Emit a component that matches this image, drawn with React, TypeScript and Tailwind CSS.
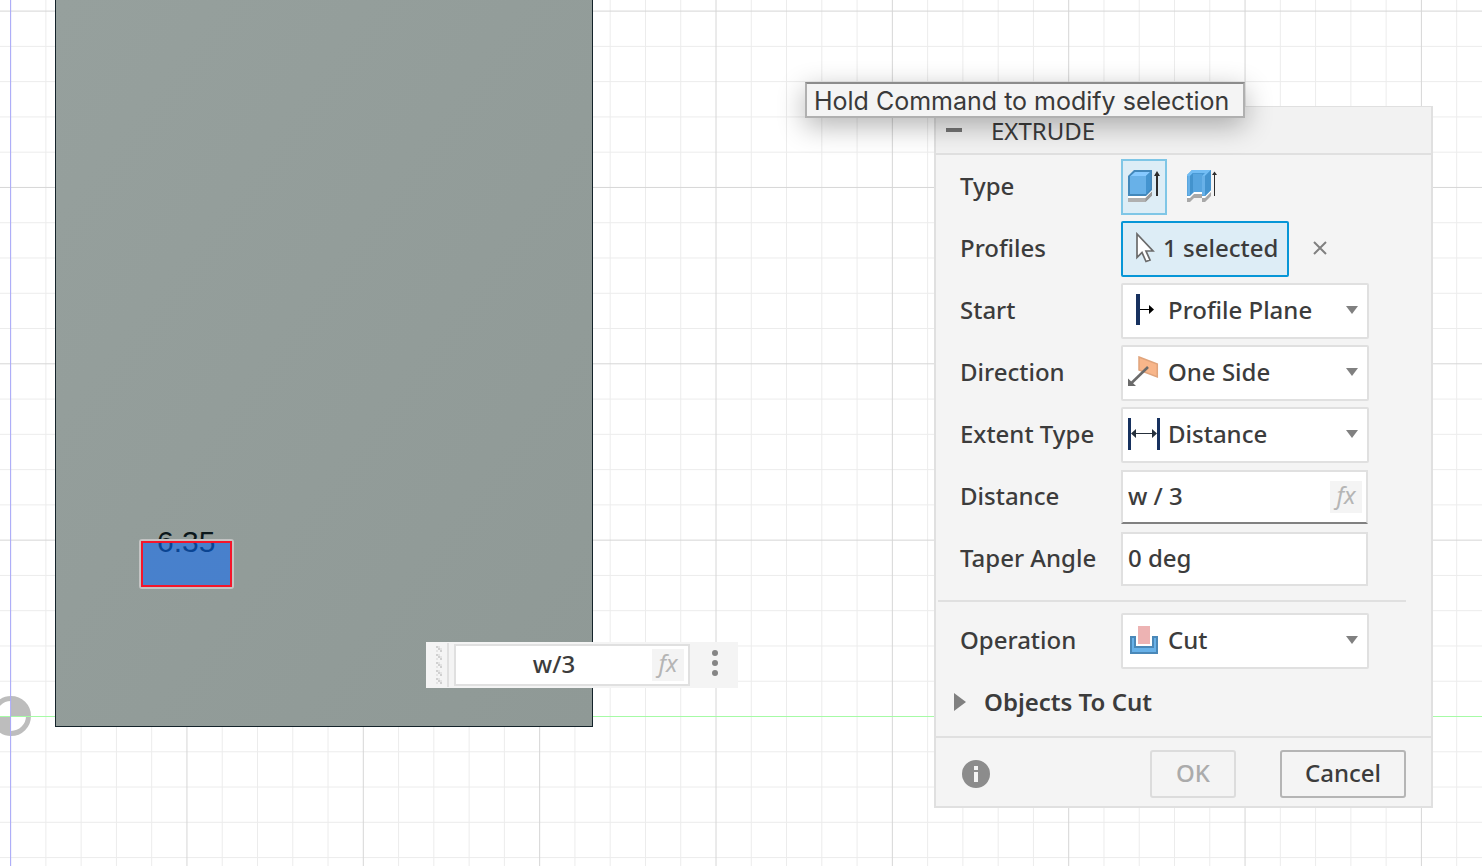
import React, { useState } from 'react';

const PITCH = 35.27;
const ORIGIN_X = 10.6;
const ORIGIN_Y = 716.5;

const gridSteps = Array.from({ length: 120 }, (_, i) => i - 30);

const SketchGrid: React.FC = () => (
  <svg className="absolute inset-0 h-full w-full" aria-hidden="true">
    {[false, true].map((major) =>
      gridSteps
        .filter((n) => (n % 5 === 0) === major)
        .map((n) => {
          const x = ORIGIN_X + n * PITCH;
          const y = ORIGIN_Y + n * PITCH;
          return (
            <g key={n} stroke={major ? '#d6d6d6' : '#ececec'}>
              <line x1={x} x2={x} y1="0" y2="100%" />
              <line x1="0" x2="100%" y1={y} y2={y} />
            </g>
          );
        })
    )}
    {/* Origin marker */}
    <circle cx="11" cy="716" r="17.5" fill="#fff" stroke="#bdbdbd" strokeWidth="5" />
    <path d="M11 716V697A19 19 0 0 1 30 716ZM11 716V735A19 19 0 0 1 -8 716Z" fill="#bdbdbd" />
    <line x1="0" x2="100%" y1={ORIGIN_Y} y2={ORIGIN_Y} stroke="#a6fba6" />
    <line x1={ORIGIN_X} x2={ORIGIN_X} y1="0" y2="100%" stroke="#a9a9fb" />
  </svg>
);

const ExtrudeIcon = () => (
  <svg width="32" height="32" viewBox="0 0 32 32">
    <path d="M0 26H18L24 20V22L18 28H0Z" fill="#fff" />
    <path d="M0 28H17.5L24 21.5V25.5L17.5 32H0Z" fill="#b0b0b0" />
    <path d="M17.5 28L24 21.5V25.5L17.5 32Z" fill="#989898" />
    <path d="M0 6L6 0H24V20L18 26H0Z" fill="#4388bb" />
    <path d="M2.5 6L7 2H22L18 6Z" fill="#86c9ff" />
    <path d="M18 6L22.5 2V19L18 24Z" fill="#4494cf" />
    <path d="M2 6H18V24H2Z" fill="#68b1e8" />
    <path d="M29 5V26" stroke="#2c2c2c" strokeWidth="2" />
    <path d="M26 6L29 1L32 6Z" fill="#2c2c2c" />
  </svg>
);

const ThinExtrudeIcon = () => (
  <svg width="32" height="32" viewBox="0 0 32 32">
    <path d="M0 26H3L7 22H15V26H18L24 20V24L18 29H15V26H7L3 29H0Z" fill="#fff" />
    <path d="M0 28H3L7 24H15V28H18L24 22V26L18 32H15V28H7L3 32H0Z" fill="#a8a8a8" />
    <path d="M0 5L5 0H24V20L18 26H15V22H7L3 26H0Z" fill="#4a9ad5" />
    <path d="M6 4H15V22H6Z" fill="#57a5df" />
    <path d="M0 5L5 0H24L18 6H15L18 3H6L3 6H0Z" fill="#72bdf4" />
    <path d="M0.500 6H3V25.500H0.500ZM15 6H18V25.500H15Z" fill="#68b1e8" />
    <path d="M3 6L6 3V22L3 25Z" fill="#4393cd" />
    <path d="M18 6L24 0V20L18 26Z" fill="#4494cf" />
    <path d="M27.5 4V26" stroke="#2c2c2c" />
    <path d="M25 5L27.5 1.5L30 5Z" fill="#2c2c2c" />
  </svg>
);

const CursorIcon = () => (
  <svg width="20" height="32" viewBox="0 0 20 32">
    <path
      d="M2 2V25.5L7 20.5L11 29.5L15 28L11 19H18Z"
      fill="#fff"
      stroke="#6b6b6b"
      strokeWidth="1.7"
    />
  </svg>
);

const ProfilePlaneIcon = () => (
  <svg width="32" height="32" viewBox="0 0 32 32">
    <path d="M8 0H12V31H8Z" fill="#17315f" />
    <path d="M12 15.5H23" stroke="#000" />
    <path d="M21 11L26 15.5L21 20Z" fill="#000" />
  </svg>
);

const OneSideIcon = () => (
  <svg width="32" height="32" viewBox="0 0 32 32">
    <path d="M11 1L29.3 8V21L11 14Z" fill="#f8b68a" stroke="#e0a47c" strokeWidth="1.5" />
    <path d="M20 11L3.5 27" stroke="#6a6a6a" strokeWidth="2.6" />
    <path d="M0 22.5V30H8Z" fill="#6a6a6a" />
  </svg>
);

const DistanceIcon = () => (
  <svg width="32" height="32" viewBox="0 0 32 32">
    <path d="M0 0H3V32H0ZM29 0H32V32H29Z" fill="#17315f" />
    <path d="M5 15.5H27" stroke="#26303c" />
    <path d="M8 11L3 15.5L8 20ZM24 11L29 15.5L24 20Z" fill="#26303c" />
  </svg>
);

const CutIcon = () => (
  <svg width="32" height="32" viewBox="0 0 32 32">
    <path d="M3 13H7V23H25V13H29V29H3Z" fill="#68b1e8" stroke="#4a88b8" strokeWidth="2" />
    <path d="M8 11H24V22H8Z" fill="#fff" />
    <path d="M10 2H22V20H10Z" fill="#edb3b3" />
  </svg>
);

interface RowProps {
  label: string;
  htmlFor: string;
  children: React.ReactNode;
}

const Row: React.FC<RowProps> = ({ label, htmlFor, children }) => (
  <div className="flex h-14 items-center">
    <label htmlFor={htmlFor} className="w-[161px] shrink-0 pb-0.5">
      {label}
    </label>
    {children}
  </div>
);

interface DropdownProps {
  id: string;
  options: string[];
  icon: React.ReactNode;
}

const Dropdown: React.FC<DropdownProps> = ({ id, options, icon }) => (
  <div className="relative w-[248px]">
    <select
      id={id}
      className="h-14 w-full appearance-none rounded-[2px] border-2 border-[#e0e0e0] bg-white pb-0.5 pl-[45px] pr-8"
    >
      {options.map((option) => (
        <option key={option}>{option}</option>
      ))}
    </select>
    <span className="pointer-events-none absolute inset-y-0 left-[7px] flex items-center pb-0.5">
      {icon}
    </span>
    <span className="pointer-events-none absolute inset-y-0 right-[11px] flex items-center pb-0.5">
      <svg width="12" height="8" viewBox="0 0 12 8">
        <path d="M0 0H12L6 8Z" fill="#808080" />
      </svg>
    </span>
  </div>
);

const FxButton: React.FC = () => (
  <button
    type="button"
    className="absolute right-1.5 top-1/2 h-8 w-8 -translate-y-1/2 bg-[#f4f4f4] pb-1 text-2xl leading-7 font-normal italic text-[#b5b5b5]"
  >
    fx
  </button>
);

const ExtrudeDialog: React.FC = () => {
  const [distance, setDistance] = useState('w / 3');
  const [taper, setTaper] = useState('0 deg');

  return (
    <form className="absolute right-[49px] top-[106px] w-[499px] border-2 border-t border-[#e0e0e0] bg-[#f4f4f4] text-2xl font-medium text-[#3c3c3c]">
      <header className="flex h-12 items-center border-b-2 border-[#e0e0e0] bg-[#f2f2f2] pl-2.5 pt-0.5">
        <button type="button" aria-label="Collapse" className="flex h-4 w-4 items-center pb-0.5">
          <span className="h-1 w-full bg-[#757575]" />
        </button>
        <h2 className="ml-[29px] font-normal">EXTRUDE</h2>
      </header>

      <div className="flex flex-col gap-1.5 pl-6 pt-1">
        <Row label="Type" htmlFor="type-extrude">
          <button
            id="type-extrude"
            type="button"
            aria-label="Extrude"
            className="flex h-14 w-[46px] items-center border-2 border-[#7fc6e6] bg-[#ddedf6] pb-0.5 pl-[5px]"
          >
            <ExtrudeIcon />
          </button>
          <button type="button" aria-label="Thin extrude" className="ml-5 pb-0.5">
            <ThinExtrudeIcon />
          </button>
        </Row>

        <Row label="Profiles" htmlFor="profiles">
          <button
            id="profiles"
            type="button"
            className="flex h-14 w-[168px] items-center gap-2 rounded-[2px] border-2 border-[#0696d7] bg-[#ddedf6] pb-0.5 pl-3"
          >
            <CursorIcon />
            1 selected
          </button>
          <button type="button" aria-label="Clear profiles" className="ml-6 pb-0.5">
            <svg width="14" height="14" viewBox="0 0 14 14">
              <path d="M1 1L13 13M13 1L1 13" stroke="#808080" strokeWidth="2" />
            </svg>
          </button>
        </Row>

        <Row label="Start" htmlFor="start">
          <Dropdown id="start" options={['Profile Plane', 'Offset Plane', 'Object']} icon={<ProfilePlaneIcon />} />
        </Row>
        <Row label="Direction" htmlFor="direction">
          <Dropdown id="direction" options={['One Side', 'Two Sides', 'Symmetric']} icon={<OneSideIcon />} />
        </Row>
        <Row label="Extent Type" htmlFor="extent">
          <Dropdown id="extent" options={['Distance', 'To Object', 'All']} icon={<DistanceIcon />} />
        </Row>
        <Row label="Distance" htmlFor="distance">
          <div className="relative w-[247px]">
            <input
              id="distance"
              value={distance}
              onChange={(e) => setDistance(e.target.value)}
              className="block h-[54px] w-full border-2 border-[#e0e0e0] border-b-[#808080] bg-white pb-1 pl-[5px] pr-10 outline-none"
            />
            <FxButton />
          </div>
        </Row>
        <Row label="Taper Angle" htmlFor="taper">
          <input
            id="taper"
            value={taper}
            onChange={(e) => setTaper(e.target.value)}
            className="h-[54px] w-[247px] border-2 border-[#e0e0e0] bg-white pb-1 pl-[5px] outline-none"
          />
        </Row>
      </div>

      <hr className="ml-0.5 mr-[25px] mt-[13px] border-t-2 border-[#e0e0e0]" />

      <div className="mt-[11px] pl-6">
        <Row label="Operation" htmlFor="operation">
          <Dropdown id="operation" options={['Cut', 'Join', 'Intersect', 'New Body']} icon={<CutIcon />} />
        </Row>
      </div>

      <button type="button" className="mt-1.5 flex h-14 items-center gap-[18px] pb-0.5 pl-[18px] font-semibold">
        <svg width="12" height="18" viewBox="0 0 12 18">
          <path d="M0 0L12 9L0 18Z" fill="#808080" />
        </svg>
        Objects To Cut
      </button>

      <footer className="mt-[5px] flex items-center border-t-2 border-[#e0e0e0] pb-2 pl-[26px] pr-[25px] pt-3">
        <button type="button" aria-label="Info">
          <svg width="28" height="28" viewBox="0 0 28 28">
            <circle cx="14" cy="14" r="14" fill="#8c8c8c" />
            <path d="M12 6H16V10H12ZM12 12H16V22H12Z" fill="#f4f4f4" />
          </svg>
        </button>
        <button
          type="button"
          disabled
          className="ml-auto h-12 w-[86px] rounded-[3px] border-2 border-[#dcdcdc] pb-0.5 text-[#ababab]"
        >
          OK
        </button>
        <button type="button" className="ml-11 h-12 w-[126px] rounded-[3px] border-2 border-[#b5b5b5] pb-0.5">
          Cancel
        </button>
      </footer>
    </form>
  );
};

const DistanceToolbar: React.FC = () => {
  const [value, setValue] = useState('w/3');

  return (
    <div className="absolute left-[426px] top-[642px] flex h-[46px] w-[312px] items-center bg-[#f4f4f4] text-2xl font-medium text-[#3c3c3c]">
      <svg className="ml-2 shrink-0" width="10" height="38" viewBox="0 0 10 38">
        {[0, 8, 16, 24, 32].map((y) => (
          <g key={y} fill="#d0d0d0">
            <path d={`M2 ${y}H4V${y + 2}H2ZM4 ${y + 2}H6V${y + 4}H4ZM6 ${y + 4}H8V${y + 6}H6Z`} />
            <path
              d={`M4 ${y}H6V${y + 2}H4ZM6 ${y + 2}H8V${y + 4}H6ZM2 ${y + 4}H4V${y + 6}H2Z`}
              fill="#e4e4e4"
            />
          </g>
        ))}
      </svg>
      <span className="ml-[3px] h-11 w-0.5 shrink-0 bg-[#e0e0e0]" />
      <div className="relative ml-[5px] w-[236px]">
        <input
          aria-label="Distance"
          value={value}
          onChange={(e) => setValue(e.target.value)}
          className="block h-[42px] w-full border-2 border-[#e0e0e0] bg-white pb-1 pr-9 text-center outline-none"
        />
        <FxButton />
      </div>
      <button type="button" aria-label="More" className="ml-[22px] pb-1">
        <svg width="6" height="26" viewBox="0 0 6 26">
          <g fill="#858585">
            <circle cx="3" cy="3" r="3" />
            <circle cx="3" cy="13" r="3" />
            <circle cx="3" cy="23" r="3" />
          </g>
        </svg>
      </button>
    </div>
  );
};

export default function App() {
  return (
    <main className="relative min-h-screen overflow-hidden bg-white font-['Noto_Sans',sans-serif]">
      <SketchGrid />

      {/* Body with the selected profile */}
      <div className="absolute left-[55px] top-0 h-[727px] w-[538px] border border-t-0 border-[#14232a] bg-linear-to-br from-[#96a09d] to-[#8f9996]">
        <span className="absolute left-[101px] top-[526px] font-['Liberation_Sans',sans-serif] text-[30px] leading-8 text-[#0c181b]">
          6.35
        </span>
        <div className="absolute left-[83px] top-[539px] h-[50px] w-[95px] rounded-[3px] border-2 border-[#c3c3c3]">
          <div className="h-full w-full border-2 border-[#f5152a] bg-[#0a69f8]/54" />
        </div>
      </div>

      <DistanceToolbar />
      <ExtrudeDialog />

      <div
        role="tooltip"
        className="absolute right-[237px] top-[82px] flex h-9 w-[440px] items-center border-2 border-[#b0b0b0] border-t-[#8c8c8c] bg-[#f4f4f4] pl-[7px] pt-1 font-['Inter',sans-serif] text-[25px] whitespace-nowrap text-[#3a3a3a] shadow-[0_8px_28px_rgba(0,0,0,0.3)]"
      >
        Hold Command to modify selection
      </div>
    </main>
  );
}
